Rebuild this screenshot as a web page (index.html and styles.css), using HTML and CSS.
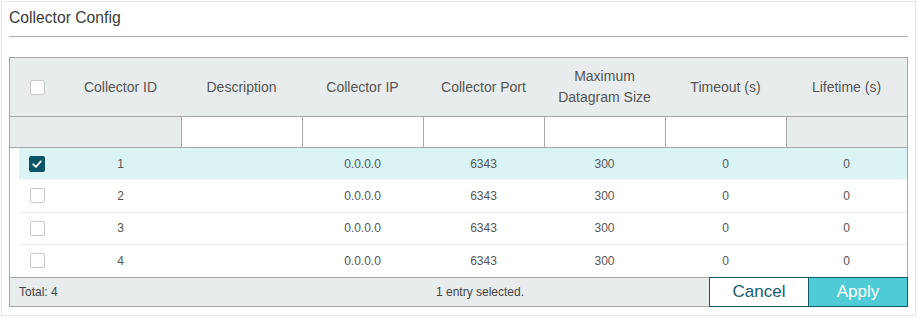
FILE: index.html
```html
<!DOCTYPE html>
<html lang="en">
<head>
    <meta charset="UTF-8">
    <meta name="viewport" content="width=device-width, initial-scale=1.0">
    <title>Collector Config</title>
    <link rel="stylesheet" href="styles.css">
</head>
<body>

<div class="panel">
    <div class="title">Collector Config</div>

    <div class="grid-table">
        <div class="head">
            <div class="cell check-cell"><span class="box"></span></div>
            <div class="cell">Collector ID</div>
            <div class="cell">Description</div>
            <div class="cell">Collector IP</div>
            <div class="cell">Collector Port</div>
            <div class="cell two-line">Maximum<br>Datagram Size</div>
            <div class="cell">Timeout (s)</div>
            <div class="cell">Lifetime (s)</div>
        </div>

        <div class="filter">
            <div class="f-blank first"></div>
            <div class="f-input"><input type="text"></div>
            <div class="f-input"><input type="text"></div>
            <div class="f-input"><input type="text"></div>
            <div class="f-input"><input type="text"></div>
            <div class="f-input"><input type="text"></div>
            <div class="f-blank"></div>
        </div>

        <div class="rows">
            <div class="row selected">
                <div class="cell check-cell"><span class="box checked"><svg width="16" height="16" viewBox="0 0 16 16"><path d="M4.2 8.3 L6.9 10.8 L11.8 5.4" fill="none" stroke="#fff" stroke-width="1.8" stroke-linecap="round" stroke-linejoin="round"/></svg></span></div>
                <div class="cell">1</div>
                <div class="cell"></div>
                <div class="cell">0.0.0.0</div>
                <div class="cell">6343</div>
                <div class="cell">300</div>
                <div class="cell">0</div>
                <div class="cell">0</div>
            </div>
            <div class="row">
                <div class="cell check-cell"><span class="box"></span></div>
                <div class="cell">2</div>
                <div class="cell"></div>
                <div class="cell">0.0.0.0</div>
                <div class="cell">6343</div>
                <div class="cell">300</div>
                <div class="cell">0</div>
                <div class="cell">0</div>
            </div>
            <div class="row">
                <div class="cell check-cell"><span class="box"></span></div>
                <div class="cell">3</div>
                <div class="cell"></div>
                <div class="cell">0.0.0.0</div>
                <div class="cell">6343</div>
                <div class="cell">300</div>
                <div class="cell">0</div>
                <div class="cell">0</div>
            </div>
            <div class="row last">
                <div class="cell check-cell"><span class="box"></span></div>
                <div class="cell">4</div>
                <div class="cell"></div>
                <div class="cell">0.0.0.0</div>
                <div class="cell">6343</div>
                <div class="cell">300</div>
                <div class="cell">0</div>
                <div class="cell">0</div>
            </div>
        </div>

        <div class="footer">
            <span class="total">Total: 4</span>
            <span class="status">1 entry selected.</span>
            <div class="actions">
                <button class="btn cancel">Cancel</button>
                <button class="btn apply">Apply</button>
            </div>
        </div>
    </div>
</div>

</body>
</html>
```

FILE: styles.css
```css
* {
    margin: 0;
    padding: 0;
    box-sizing: border-box;
}

body {
    font-family: "Liberation Sans", Arial, sans-serif;
    background-color: #fff;
    color: #555;
}

.panel {
    margin: 1px;
    width: 915px;
    height: 315px;
    border: 1px solid #e6e6e6;
    padding: 0 7px;
}

.title {
    font-size: 15.7px;
    line-height: 31px;
    height: 35px;
    padding-bottom: 3px;
    color: #3a3a3a;
    border-bottom: 1px solid #a9b0b0;
    margin-bottom: 20px;
}

.grid-table {
    border: 1px solid #a7a7a7;
}

.head {
    display: grid;
    grid-template-columns: 50px repeat(7, 121px);
    height: 59px;
    background-color: #e8ecec;
    border-bottom: 1px solid #a7a7a7;
    font-size: 14px;
    color: #555;
}

.cell {
    display: flex;
    align-items: center;
    justify-content: center;
    text-align: center;
}

.two-line {
    line-height: 21px;
    padding-bottom: 1px;
}

.check-cell {
    justify-content: flex-start;
    padding-left: 20px;
}

.box {
    display: block;
    width: 15px;
    height: 15px;
    border: 1px solid #c9c9c9;
    border-radius: 2px;
    background-color: #fff;
}

.box.checked {
    width: 16px;
    height: 16px;
    margin-left: -1px;
    border: none;
    background-color: #0b5566;
}

.box svg {
    display: block;
}

.filter {
    display: grid;
    grid-template-columns: 171px repeat(6, 121px);
    height: 31px;
    background-color: #e8ecec;
    border-bottom: 1px solid #a7a7a7;
}

.f-input,
.f-blank {
    border-left: 1px solid #a7a7a7;
}

.f-blank.first {
    border-left: none;
}

.f-input input {
    display: block;
    width: 100%;
    height: 100%;
    border: none;
    outline: none;
    background-color: #fff;
}

.rows {
    padding-left: 9px;
}

.row {
    display: grid;
    grid-template-columns: 41px repeat(7, 121px);
    height: 32.25px;
    border-bottom: 1px solid #efefef;
    font-size: 12px;
    color: #555;
}

.row.last {
    border-bottom: none;
}

.row .check-cell {
    padding-left: 11px;
}

.row.selected {
    background-color: #daf4f5;
    border-bottom-color: #f4f4f4;
}

.footer {
    display: flex;
    align-items: center;
    height: 29px;
    background-color: #e8ecec;
    border-top: 1px solid #a7a7a7;
    font-size: 12px;
    color: #444;
}

.total {
    width: 241px;
    padding-left: 9px;
}

.status {
    flex: 1;
    text-align: center;
}

.actions {
    display: flex;
    margin: -1px -1px -1px 0;
    height: 30px;
}

.btn {
    font-family: "Liberation Sans", Arial, sans-serif;
    font-size: 17px;
    height: 30px;
    border: 1px solid #0e5a69;
    cursor: pointer;
}

.cancel {
    width: 99px;
    border-right: none;
    background-color: #fff;
    color: #1a5e6c;
}

.apply {
    width: 100px;
    background-color: #4ecbd5;
    color: #fff;
}
```
